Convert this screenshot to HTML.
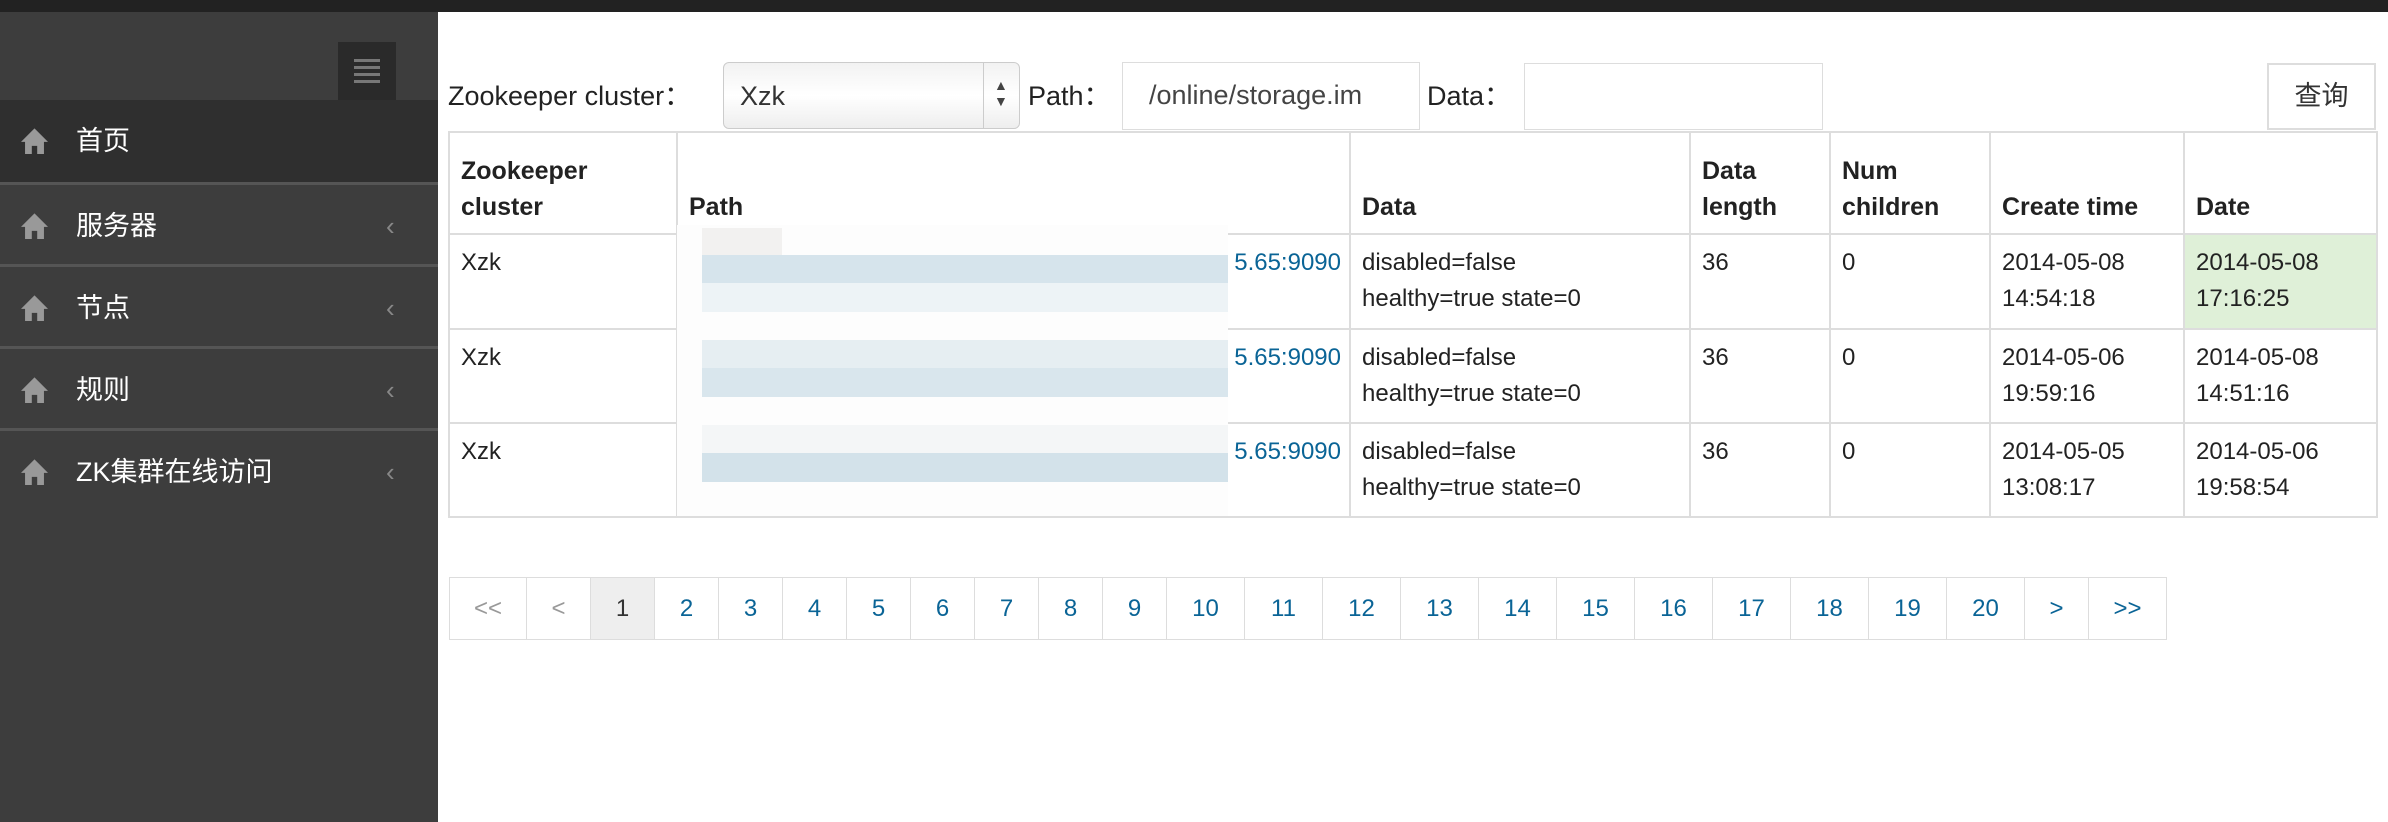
<!DOCTYPE html>
<html><head><meta charset="utf-8"><style>
*{margin:0;padding:0;box-sizing:border-box}
body{width:2388px;height:822px;overflow:hidden;background:#fff;font-family:"Liberation Sans","Noto Sans CJK SC",sans-serif;color:#222;position:relative}
.abs{position:absolute}
#top{left:0;top:0;width:2388px;height:12px;background:#222}
#side{left:0;top:12px;width:438px;height:810px;background:#3d3d3d}
.ham{left:338px;top:42px;width:58px;height:58px;background:#2a2a2a}
.ham i{position:absolute;left:16px;width:26px;height:3px;background:#777}
.item{left:0;width:438px;height:82px;color:#fff;font-size:27px;line-height:82px;border-top:3px solid #555}
.item .ic{position:absolute;left:21px;top:0}
.item .t{position:absolute;left:76px}
.item .ch{position:absolute;left:386px;top:0;color:#888;font-size:26px}
.lbl{font-size:27px;color:#222}
.inp{border:1px solid #ddd;background:#fff;font-size:27px;color:#444}
table{position:absolute;left:448px;top:131px;border-collapse:collapse;font-size:24px;table-layout:fixed}
td,th{border:2px solid #ddd;padding:0 11px;vertical-align:top;line-height:36px;text-align:left}
th{font-weight:bold;vertical-align:bottom;padding-bottom:8px;font-size:25px}
td{padding-top:10px}
.pg{top:577px;height:63px;border:1px solid #ddd;border-left:none;color:#0a6496;font-size:24px;text-align:center;line-height:61px}
</style></head><body>
<div id="top" class="abs"></div>
<div id="side" class="abs"></div>
<div class="abs ham"><i style="top:17px"></i><i style="top:24px"></i><i style="top:31px"></i><i style="top:38px"></i></div>
<div class="abs" style="left:0;top:100px;width:438px;height:82px;background:#2f2f2f"></div>
<svg width="0" height="0" style="position:absolute"><defs><symbol id="h" viewBox="0 0 20 20"><path d="M10 1L0 11h3v9h5v-6h4v6h5v-9h3z" fill="#999"/></symbol></defs></svg>
<div class="abs item" style="top:100px;border-top:none;background:#2f2f2f"><svg class="ic" width="27" height="27" style="top:27px"><use href="#h"/></svg><span class="t">首页</span></div>
<div class="abs item" style="top:182px"><svg class="ic" width="27" height="27" style="top:27px"><use href="#h"/></svg><span class="t">服务器</span><span class="ch">‹</span></div>
<div class="abs item" style="top:264px"><svg class="ic" width="27" height="27" style="top:27px"><use href="#h"/></svg><span class="t">节点</span><span class="ch">‹</span></div>
<div class="abs item" style="top:346px"><svg class="ic" width="27" height="27" style="top:27px"><use href="#h"/></svg><span class="t">规则</span><span class="ch">‹</span></div>
<div class="abs item" style="top:428px"><svg class="ic" width="27" height="27" style="top:27px"><use href="#h"/></svg><span class="t">ZK集群在线访问</span><span class="ch">‹</span></div>

<div class="abs lbl" style="left:448px;top:74px">Zookeeper cluster：</div>
<div class="abs" style="left:723px;top:62px;width:297px;height:67px;border:1px solid #ccc;border-radius:6px;background:linear-gradient(#f2f2f2,#fff 50%,#eee)">
<span style="position:absolute;left:16px;top:18px;font-size:27px;color:#333">Xzk</span>
<div style="position:absolute;left:259px;top:0;width:1px;height:65px;background:#ccc"></div>
<span style="position:absolute;left:270px;top:14px;font-size:14px;line-height:16px;color:#444">▲<br>▼</span></div>
<div class="abs lbl" style="left:1028px;top:74px">Path：</div>
<div class="abs inp" style="left:1122px;top:62px;width:298px;height:68px;padding:17px 0 0 26px;white-space:nowrap;overflow:hidden">/online/storage.im</div>
<div class="abs lbl" style="left:1427px;top:74px">Data：</div>
<div class="abs inp" style="left:1524px;top:63px;width:299px;height:67px"></div>
<div class="abs" style="left:2267px;top:63px;width:109px;height:67px;border:2px solid #ddd;font-size:27px;text-align:center;line-height:63px;color:#333">查询</div>

<table>
<colgroup><col style="width:228px"><col style="width:673px"><col style="width:340px"><col style="width:140px"><col style="width:160px"><col style="width:194px"><col style="width:193px"></colgroup>
<tr style="height:102px"><th>Zookeeper<br>cluster</th><th>Path</th><th>Data</th><th>Data<br>length</th><th>Num<br>children</th><th>Create time</th><th>Date</th></tr>
<tr style="height:95px"><td>Xzk</td><td style="text-align:right;color:#0a6496;padding-right:8px">5.65:9090</td><td>disabled=false<br>healthy=true state=0</td><td>36</td><td>0</td><td>2014-05-08<br>14:54:18</td><td style="background:#dff0d8">2014-05-08<br>17:16:25</td></tr>
<tr style="height:94px"><td>Xzk</td><td style="text-align:right;color:#0a6496;padding-right:8px">5.65:9090</td><td>disabled=false<br>healthy=true state=0</td><td>36</td><td>0</td><td>2014-05-06<br>19:59:16</td><td>2014-05-08<br>14:51:16</td></tr>
<tr style="height:94px"><td>Xzk</td><td style="text-align:right;color:#0a6496;padding-right:8px">5.65:9090</td><td>disabled=false<br>healthy=true state=0</td><td>36</td><td>0</td><td>2014-05-05<br>13:08:17</td><td>2014-05-06<br>19:58:54</td></tr>
</table>
<div class="abs" style="left:677px;top:225px;width:551px;height:291px;background:#fdfdfd"></div>
<div class="abs" style="left:702px;top:228px;width:80px;height:27px;background:#f2f1f0"></div>
<div class="abs" style="left:702px;top:255px;width:526px;height:28px;background:#d6e4ec"></div>
<div class="abs" style="left:702px;top:283px;width:526px;height:29px;background:#edf3f6"></div>
<div class="abs" style="left:702px;top:340px;width:526px;height:28px;background:#e6eef2"></div>
<div class="abs" style="left:702px;top:368px;width:526px;height:29px;background:#d9e6ed"></div>
<div class="abs" style="left:702px;top:425px;width:526px;height:28px;background:#f4f6f7"></div>
<div class="abs" style="left:702px;top:453px;width:526px;height:29px;background:#d3e2ea"></div>

<div class="abs pg" style="left:449px;width:78px;border-left:1px solid #ddd;color:#999">&lt;&lt;</div>
<div class="abs pg" style="left:527px;width:64px;color:#999">&lt;</div>
<div class="abs pg" style="left:591px;width:64px;background:#eee;color:#333">1</div>
<div class="abs pg" style="left:655px;width:64px">2</div>
<div class="abs pg" style="left:719px;width:64px">3</div>
<div class="abs pg" style="left:783px;width:64px">4</div>
<div class="abs pg" style="left:847px;width:64px">5</div>
<div class="abs pg" style="left:911px;width:64px">6</div>
<div class="abs pg" style="left:975px;width:64px">7</div>
<div class="abs pg" style="left:1039px;width:64px">8</div>
<div class="abs pg" style="left:1103px;width:64px">9</div>
<div class="abs pg" style="left:1167px;width:78px">10</div>
<div class="abs pg" style="left:1245px;width:78px">11</div>
<div class="abs pg" style="left:1323px;width:78px">12</div>
<div class="abs pg" style="left:1401px;width:78px">13</div>
<div class="abs pg" style="left:1479px;width:78px">14</div>
<div class="abs pg" style="left:1557px;width:78px">15</div>
<div class="abs pg" style="left:1635px;width:78px">16</div>
<div class="abs pg" style="left:1713px;width:78px">17</div>
<div class="abs pg" style="left:1791px;width:78px">18</div>
<div class="abs pg" style="left:1869px;width:78px">19</div>
<div class="abs pg" style="left:1947px;width:78px">20</div>
<div class="abs pg" style="left:2025px;width:64px">&gt;</div>
<div class="abs pg" style="left:2089px;width:78px">&gt;&gt;</div>
</body></html>
